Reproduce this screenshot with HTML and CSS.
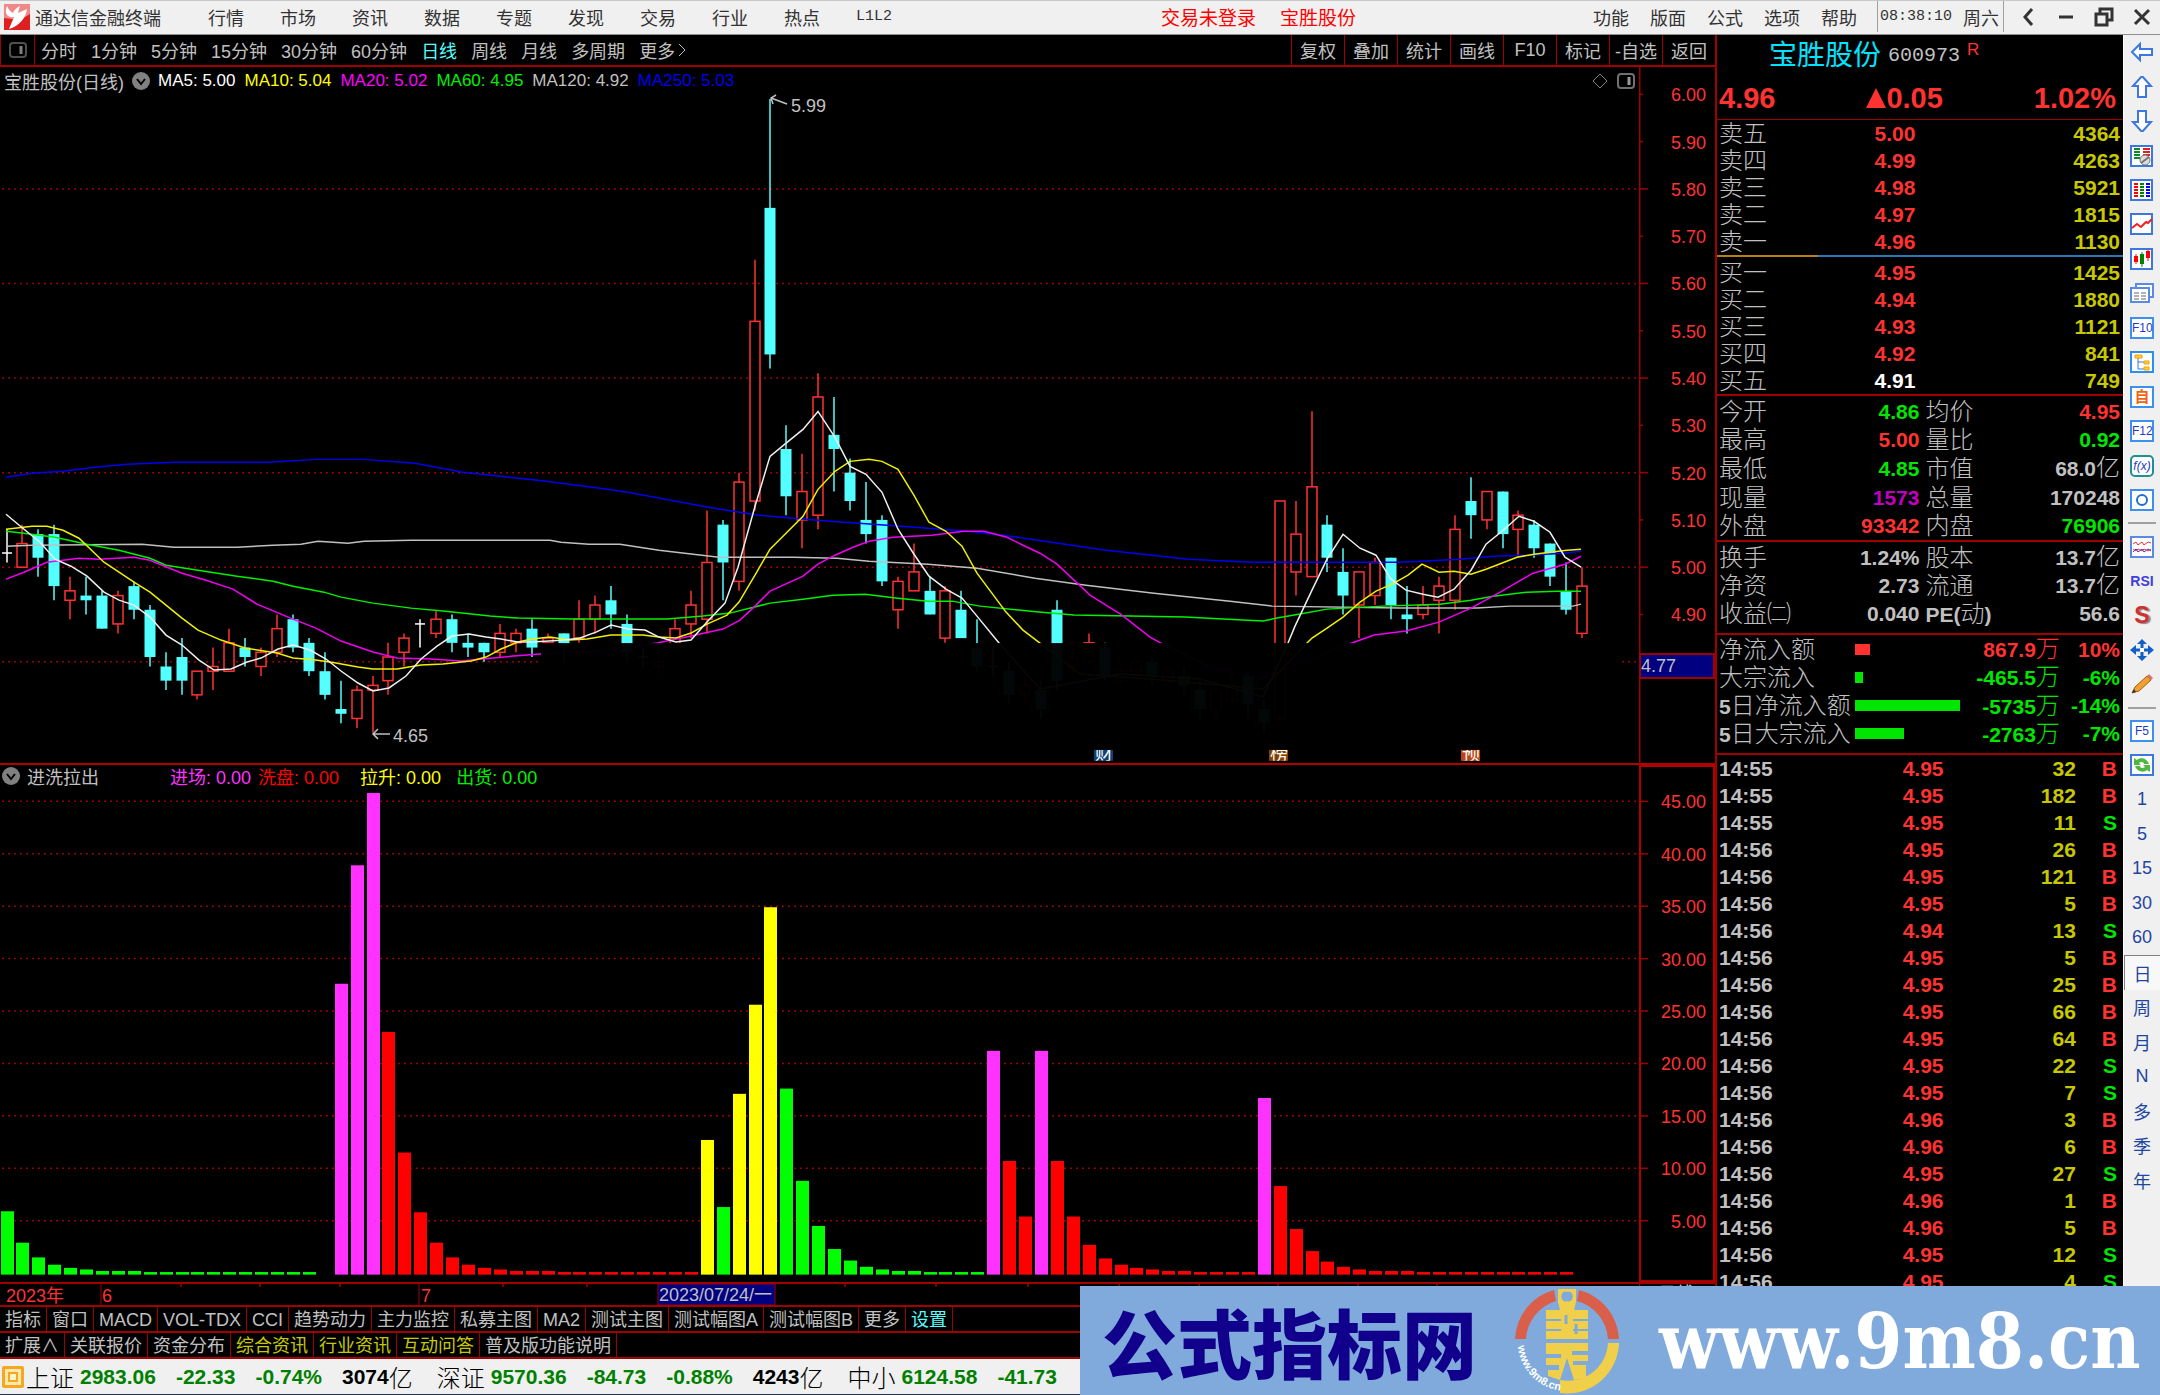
FILE: index.html
```html
<!DOCTYPE html>
<html lang="zh-CN">
<head>
    <meta charset="utf-8">
    <title>通达信金融终端</title>
    <link rel="stylesheet" href="styles.css">
</head>
<body>
<div class="app">

  <header class="topbar">
    <svg class="logo" viewBox="0 0 26 26" width="26" height="26">
      <rect width="26" height="26" fill="#e02020"/>
      <path d="M0 0H26V10L16 16L0 14Z" fill="#f08888"/>
      <path d="M3 2C0 9 3 14 10 13L5 25C15 22 22 14 23 5L14 9L16 2C12 4 10 6 9 9C7 8 5 6 3 2Z" fill="#fff"/>
    </svg>
    <span class="app-name">通达信金融终端</span>
    <nav class="menu">
      <a href="#">行情</a><a href="#">市场</a><a href="#">资讯</a><a href="#">数据</a><a href="#">专题</a><a href="#">发现</a><a href="#">交易</a><a href="#">行业</a><a href="#">热点</a><a href="#" class="mono">L1L2</a>
    </nav>
    <div class="login">
      <a href="#">交易未登录</a><a href="#">宝胜股份</a>
    </div>
    <nav class="menu menu-right">
      <a href="#">功能</a><a href="#">版面</a><a href="#">公式</a><a href="#">选项</a><a href="#">帮助</a>
    </nav>
    <div class="clock"><span class="mono">08:38:10</span><span>周六</span></div>
    <div class="win">
      <button aria-label="后退"><svg viewBox="0 0 20 20" width="20" height="20"><path d="M14 2L7 10L14 18" fill="none" stroke="#333" stroke-width="3"/></svg></button>
      <button aria-label="最小化"><svg viewBox="0 0 20 20" width="20" height="20"><path d="M3 10H17" stroke="#333" stroke-width="3"/></svg></button>
      <button aria-label="还原"><svg viewBox="0 0 20 20" width="20" height="20"><path d="M6 6V2H18V13H14M2 7H13V18H2Z" fill="none" stroke="#333" stroke-width="3"/></svg></button>
      <button aria-label="关闭"><svg viewBox="0 0 20 20" width="20" height="20"><path d="M3 3L17 17M17 3L3 17" stroke="#333" stroke-width="3"/></svg></button>
    </div>
  </header>

  <div class="body">
    <main class="left">
      <div class="toolbar">
        <button class="pane" aria-label="侧栏"><svg viewBox="0 0 18 18" width="18" height="18"><rect x="1" y="2" width="16" height="14" rx="3" fill="none" stroke="#505050" stroke-width="2"/><path d="M12 5V13" stroke="#808080" stroke-width="3"/></svg></button>
        <div class="periods">
          <a href="#">分时</a><a href="#">1分钟</a><a href="#">5分钟</a><a href="#">15分钟</a><a href="#">30分钟</a><a href="#">60分钟</a><a href="#" class="on">日线</a><a href="#">周线</a><a href="#">月线</a><a href="#">多周期</a><a href="#">更多<svg viewBox="0 0 14 16" width="14" height="16"><path d="M4 2L10 8L4 14" fill="none" stroke="#c0c0c0"/></svg></a>
        </div>
        <div class="tools">
          <button>复权</button><button>叠加</button><button>统计</button><button>画线</button><button>F10</button><button>标记</button><button>-自选</button><button>返回</button>
        </div>
      </div>

      <section class="chart chart-main">
        <div class="plot">
          <div class="legend">
            <span class="title">宝胜股份(日线)</span>
            <svg viewBox="0 0 18 18" width="18" height="18"><circle cx="9" cy="9" r="9" fill="#808080"/><path d="M5 7L9 12L13 7" fill="none" stroke="#000" stroke-width="2"/></svg>
            <span class="values">
              <span class="c-white">MA5: 5.00</span>
              <span class="c-yellow">MA10: 5.04</span>
              <span class="c-magenta">MA20: 5.02</span>
              <span class="c-green">MA60: 4.95</span>
              <span class="c-gray">MA120: 4.92</span>
              <span class="c-blue">MA250: 5.03</span>
            </span>
            <svg class="push" viewBox="0 0 18 18" width="18" height="18"><path d="M9 2L16 9L9 16L2 9Z" fill="none" stroke="#808080"/></svg>
            <svg viewBox="0 0 18 18" width="18" height="18"><rect x="1" y="2" width="16" height="14" rx="3" fill="none" stroke="#707070" stroke-width="2"/><path d="M12 5V13" stroke="#999" stroke-width="3"/></svg>
          </div>
          <svg id="kline" class="canvas" viewBox="0 91 1639 673" preserveAspectRatio="none"></svg>
        </div>
        <svg id="price-axis" class="axis" viewBox="1639 67 76 697" preserveAspectRatio="none"></svg>
      </section>

      <section class="chart chart-sub">
        <div class="plot">
          <div class="legend legend-sub">
            <svg viewBox="0 0 18 18" width="18" height="18"><circle cx="9" cy="9" r="9" fill="#808080"/><path d="M5 7L9 12L13 7" fill="none" stroke="#000" stroke-width="2"/></svg>
            <span class="title">进洗拉出</span>
            <span class="c-pink">进场: 0.00</span>
            <span class="c-red">洗盘: 0.00</span>
            <span class="c-yellow">拉升: 0.00</span>
            <span class="c-green">出货: 0.00</span>
          </div>
          <svg id="bars" class="canvas" viewBox="0 789 1639 493" preserveAspectRatio="none"></svg>
        </div>
        <svg id="bar-axis" class="axis" viewBox="1639 766 76 516" preserveAspectRatio="none"></svg>
      </section>

      <div class="dates">
        <svg id="dates" viewBox="0 1284 1639 21" preserveAspectRatio="none"></svg>
        <span>日线</span>
      </div>

      <nav class="tabs">
        <a href="#">指标</a><a href="#">窗口</a><a href="#">MACD</a><a href="#">VOL-TDX</a><a href="#">CCI</a><a href="#">趋势动力</a><a href="#">主力监控</a><a href="#">私募主图</a><a href="#">MA2</a><a href="#">测试主图</a><a href="#">测试幅图A</a><a href="#">测试幅图B</a><a href="#">更多</a><a href="#" class="on">设置</a>
      </nav>
      <nav class="tabs tabs-last">
        <a href="#">扩展∧</a><a href="#">关联报价</a><a href="#">资金分布</a><a href="#" class="gold">综合资讯</a><a href="#" class="gold">行业资讯</a><a href="#" class="gold">互动问答</a><a href="#">普及版功能说明</a>
      </nav>
    </main>

    <aside class="quote">
      <div class="stock"><b>宝胜股份</b><span>600973</span><sup>R</sup></div>
      <div class="last"><span>4.96</span><span class="chg"><svg viewBox="0 0 20 20" width="20" height="20"><path d="M10 0L20 20H0Z" fill="#ff3232"/></svg>0.05</span><span>1.02%</span></div>
      <table class="depth">
        <tr><th>卖五</th><td>5.00</td><td class="vol">4364</td></tr>
        <tr><th>卖四</th><td>4.99</td><td class="vol">4263</td></tr>
        <tr><th>卖三</th><td>4.98</td><td class="vol">5921</td></tr>
        <tr><th>卖二</th><td>4.97</td><td class="vol">1815</td></tr>
        <tr><th>卖一</th><td>4.96</td><td class="vol">1130</td></tr>
      </table>
      <div class="ratio"></div>
      <table class="depth bids">
        <tr><th>买一</th><td>4.95</td><td class="vol">1425</td></tr>
        <tr><th>买二</th><td>4.94</td><td class="vol">1880</td></tr>
        <tr><th>买三</th><td>4.93</td><td class="vol">1121</td></tr>
        <tr><th>买四</th><td>4.92</td><td class="vol">841</td></tr>
        <tr><th>买五</th><td class="w">4.91</td><td class="vol">749</td></tr>
      </table>
      <table class="stats">
        <tr><th>今开</th><td class="g">4.86</td><th>均价</th><td class="r">4.95</td></tr>
        <tr><th>最高</th><td class="r">5.00</td><th>量比</th><td class="g">0.92</td></tr>
        <tr><th>最低</th><td class="g">4.85</td><th>市值</th><td>68.0<i>亿</i></td></tr>
        <tr><th>现量</th><td class="m">1573</td><th>总量</th><td>170248</td></tr>
        <tr><th>外盘</th><td class="r">93342</td><th>内盘</th><td class="g">76906</td></tr>
      </table>
      <table class="stats stats-short">
        <tr><th>换手</th><td>1.24%</td><th>股本</th><td>13.7<i>亿</i></td></tr>
        <tr><th>净资</th><td>2.73</td><th>流通</th><td>13.7<i>亿</i></td></tr>
        <tr><th>收益㈡</th><td>0.040</td><th><b>PE(</b>动<b>)</b></th><td>56.6</td></tr>
      </table>
      <table class="flow">
        <tr class="r"><th>净流入额</th><td><div class="bar" style="width:14%"></div></td><td>867.9<i>万</i></td><td>10%</td></tr>
        <tr class="g"><th>大宗流入</th><td><div class="bar" style="width:7%"></div></td><td>-465.5<i>万</i></td><td>-6%</td></tr>
        <tr class="g"><th><b>5</b>日净流入额</th><td><div class="bar" style="width:100%"></div></td><td>-5735<i>万</i></td><td>-14%</td></tr>
        <tr class="g"><th><b>5</b>日大宗流入</th><td><div class="bar" style="width:47%"></div></td><td>-2763<i>万</i></td><td>-7%</td></tr>
      </table>
      <div class="ticks">
        <table id="ticks"></table>
      </div>
    </aside>

    <aside class="sidebar">
      <button aria-label="左"><svg viewBox="0 0 24 22"><path d="M2 11L10 3V8H22V14H10V19Z" fill="#fff" stroke="#3c78e0" stroke-width="2"/></svg></button>
      <button aria-label="上"><svg viewBox="0 0 24 22"><path d="M12 0L21 10H16V21H8V10H3Z" fill="#fff" stroke="#3c78e0" stroke-width="2"/></svg></button>
      <button aria-label="下"><svg viewBox="0 0 24 22"><path d="M12 22L21 12H16V1H8V12H3Z" fill="#fff" stroke="#3c78e0" stroke-width="2"/></svg></button>
      <button aria-label="报价"><svg viewBox="0 0 24 22"><rect x="1" y="1" width="21" height="20" fill="#fff" stroke="#3c78e0" stroke-width="2"/><path d="M4 4H10M4 7H10M4 10H10M4 13H10" stroke="#0a8a2a" stroke-width="2"/><path d="M13 4H20M13 7H20M13 10H20" stroke="#e02020" stroke-width="2"/><circle cx="15" cy="15" r="5" fill="#ddd" stroke="#777"/><path d="M11 18L19 12" stroke="#777" stroke-width="2"/></svg></button>
      <button aria-label="列表"><svg viewBox="0 0 24 22"><rect x="1" y="1" width="21" height="20" fill="#fff" stroke="#3c78e0" stroke-width="2"/><path d="M6 4V19" stroke="#f00" stroke-width="4" stroke-dasharray="2 1"/><path d="M12 4V19" stroke="#008000" stroke-width="4" stroke-dasharray="2 1"/><path d="M18 4V19" stroke="#00f" stroke-width="4" stroke-dasharray="2 1"/></svg></button>
      <button aria-label="分时图"><svg viewBox="0 0 24 22"><rect x="1" y="1" width="21" height="20" fill="#fff" stroke="#3c78e0" stroke-width="2"/><path d="M2 15L7 11L11 14L16 9L18 10L22 6" fill="none" stroke="#f02020" stroke-width="2"/></svg></button>
      <button aria-label="K线图"><svg viewBox="0 0 24 22"><rect x="1" y="1" width="21" height="20" fill="#fff" stroke="#3c78e0" stroke-width="2"/><path d="M6 6V16M18 2V13" stroke="#f00" stroke-width="1"/><path d="M12 4V19" stroke="#008000"/><path d="M6 8V14M18 3V10" stroke="#f00" stroke-width="4"/><path d="M12 6V16" stroke="#008000" stroke-width="4"/></svg></button>
      <button aria-label="窗口"><svg viewBox="0 0 24 22"><path d="M6 6V2H23V15H19" fill="#fff" stroke="#5a8ae6" stroke-width="2"/><rect x="1" y="6" width="18" height="14" fill="#fff" stroke="#5a8ae6" stroke-width="2"/><path d="M4 11H9M11 11H16M4 14H9M11 14H16M4 17H9M11 17H16" stroke="#666"/></svg></button>
      <button><span class="key">F10</span></button>
      <button aria-label="树形"><svg viewBox="0 0 24 22"><rect x="1" y="1" width="22" height="20" fill="#fff" stroke="#2a90f0" stroke-width="2"/><path d="M8 7V18H14M8 11H14" fill="none" stroke="#3c78e0"/><path d="M5 4H12V7H5ZM14 10H19V13H14ZM14 16H19V19H14Z" fill="#ffd040" stroke="#f0a000"/></svg></button>
      <button><span class="key key-self">自</span></button>
      <button><span class="key">F12</span></button>
      <button><span class="key key-fx">f(x)</span></button>
      <button aria-label="刷新"><svg viewBox="0 0 24 22"><rect x="1" y="1" width="22" height="20" fill="#fff" stroke="#3c90f0" stroke-width="2"/><circle cx="12" cy="11" r="5" fill="none" stroke="#2070d0" stroke-width="2"/></svg></button>
      <hr>
      <button aria-label="指标"><svg viewBox="0 0 24 22"><rect x="1" y="1" width="22" height="20" fill="#fff" stroke="#5a8ae6" stroke-width="2"/><path d="M3 8L6 6L8 9L12 6L14 9L18 6L21 7" fill="none" stroke="#f03030" stroke-width="1"/><path d="M3 16L6 13L8 16L12 13L14 16L18 13L21 15" fill="none" stroke="#3030e0" stroke-width="1"/><path d="M3 13L6 15L8 13L12 15L14 13L18 15L21 13" fill="none" stroke="#f03030" stroke-width="1"/></svg></button>
      <button class="rsi">RSI</button>
      <button class="dollar">S</button>
      <button aria-label="移动"><svg viewBox="0 0 24 22"><path d="M12 0L17 5H7ZM12 22L17 17H7ZM0 11L6 6V16ZM24 11L18 6V16Z" fill="#1060c8"/><path d="M12 4V18M5 11H19" stroke="#1060c8" stroke-width="3"/><rect x="10" y="9" width="4" height="4" fill="#fff"/></svg></button>
      <button aria-label="画笔"><svg viewBox="0 0 24 22"><path d="M2 20L5 14L17 3L21 7L9 18Z" fill="#f0a030" stroke="#a05a10"/><path d="M17 3L19 1L23 5L21 7Z" fill="#e07070"/><path d="M2 20L4 16L6 19Z" fill="#333"/></svg></button>
      <hr>
      <button><span class="key">F5</span></button>
      <button aria-label="循环"><svg viewBox="0 0 24 22"><rect x="1" y="1" width="22" height="20" fill="#fff" stroke="#3c78e0" stroke-width="2"/><path d="M19 10C17 4 10 3 7 6L4 4V11H11L9 9C11 7 14 8 14 10ZM5 12C7 18 14 19 17 16L20 18V11H13L15 13C13 15 10 14 10 12Z" fill="#50b840"/></svg></button>
      <button>1</button>
      <button>5</button>
      <button>15</button>
      <button>30</button>
      <button>60</button>
      <button class="pressed">日</button>
      <button>周</button>
      <button>月</button>
      <button>N</button>
      <button>多</button>
      <button>季</button>
      <button>年</button>
    </aside>
  </div>

  <footer class="status">
    <svg viewBox="0 0 22 22" width="22" height="22"><rect width="22" height="22" rx="2" fill="#f5a623"/><rect x="3" y="3" width="16" height="16" fill="#ffe9a8"/><rect x="6" y="6" width="10" height="10" fill="#f5a623"/><rect x="8" y="8" width="6" height="6" fill="#fff3c8"/></svg>
    <div class="index"><i>上证</i><b>2983.06</b></div><b>-22.33</b><b>-0.74%</b><span class="amount">3074<i>亿</i></span>
    <div class="index"><i>深证</i><b>9570.36</b></div><b>-84.73</b><b>-0.88%</b><span class="amount">4243<i>亿</i></span>
    <div class="index"><i>中小</i><b>6124.58</b></div><b>-41.73</b>
  </footer>

  <div class="banner">
    <strong>公式指标网</strong>
    <svg viewBox="0 0 106 106" width="106" height="106">
      <path d="M39 2A53 53 0 0 0 0 51H11A42 42 0 0 1 41 13Z" fill="#d95f4a"/>
      <path d="M64 2A53 53 0 0 1 104 51H93A42 42 0 0 0 62 13Z" fill="#d95f4a"/>
      <path d="M104 55A52 52 0 0 1 45 105V92A40 40 0 0 0 93 55Z" fill="#f0d04a"/>
      <path fill-rule="evenodd" d="M43 1H61V14L59 22H73V51H31V22H45L43 14ZM52 4A4 5 0 1 0 52 13A4 5 0 1 0 52 4Z" fill="#f0d04a"/>
      <path d="M31 32H46M58 32H73M31 42H46M58 42H73" stroke="#80aadb" stroke-width="2"/>
      <path d="M51 27V36M61 36V46" stroke="#80aadb" stroke-width="3"/>
      <path d="M31 55H73V63H57V67H73V73H58V77H71V90L59 92L52 70L45 92L33 88V82H44V77H31V70H46V66H31Z" fill="#f0d04a"/>
      <path id="arc" d="M3 58A49 49 0 0 0 42 102" fill="none"/>
      <text fill="#fff" class="arc-text"><textPath href="#arc">www.9m8.cn</textPath></text>
    </svg>
    <span>www.9m8.cn</span>
  </div>
</div>
<script src="chart.js"></script>
</body>
</html>
```

FILE: styles.css
```css
* {
    box-sizing: border-box;
}

body {
    margin: 0;
    background: #000;
    color: #c0c0c0;
    font-family: "Liberation Sans", "Noto Sans CJK SC", sans-serif;
    font-size: 18px;
}

a {
    color: inherit;
    text-decoration: none;
}

button {
    background: none;
    border: 0;
    padding: 0;
    color: inherit;
    font: inherit;
}

i {
    font-style: normal;
    font-weight: 300;
}

.mono {
    font-family: "Liberation Mono", monospace;
    font-size: 15px;
}

.app {
    position: relative;
    display: flex;
    flex-direction: column;
    height: 100vh;
    overflow: hidden;
}

/* top bar */
.topbar {
    display: flex;
    align-items: center;
    height: 35px;
    flex: none;
    padding: 0 0 2px 4px;
    background: #f0f0f0;
    border-top: 1px solid #c8c8c8;
    border-bottom: 1px solid #909090;
    color: #333;
}

.app-name {
    margin: 0 47px 0 5px;
}

.menu {
    display: flex;
    align-items: center;
    gap: 36px;
}

.menu-right {
    gap: 21px;
    padding-right: 20px;
}

.login {
    display: flex;
    gap: 24px;
    margin: 0 auto;
    padding-left: 32px;
    color: #f00;
    font-size: 19px;
}

.clock {
    display: flex;
    align-items: center;
    gap: 11px;
    height: 100%;
    padding: 0 4px 0 2px;
    border-left: 1px solid #a0a0a0;
    border-right: 1px solid #a0a0a0;
}

.win {
    display: flex;
    gap: 18px;
    padding: 0 8px 0 14px;
}

.win svg {
    display: block;
}

/* layout */
.body {
    display: grid;
    grid-template-columns: 1fr 408px 37px;
    flex: 1;
    min-height: 0;
}

.left {
    display: flex;
    flex-direction: column;
    min-width: 0;
    min-height: 0;
}

.toolbar {
    display: flex;
    height: 32px;
    flex: none;
    border-bottom: 2px solid #a00000;
}

.pane {
    width: 35px;
    border-left: 1px solid #a00000;
    border-right: 1px solid #a00000;
}

.pane svg {
    display: block;
    margin: 0 auto;
}

.periods {
    display: flex;
    align-items: center;
    gap: 14px;
    padding-left: 6px;
}

.periods a {
    display: flex;
    align-items: center;
}

.on {
    color: #54ffff;
}

.tools {
    display: flex;
    margin-left: auto;
}

.tools button {
    width: 53px;
    border-left: 1px solid #a00000;
}

.chart {
    display: grid;
    grid-template-columns: 1fr 76px;
    min-height: 0;
}

.chart-main {
    flex: 697 1 0;
}

.chart-sub {
    flex: 518 1 0;
    border-top: 2px solid #b00000;
}

.plot {
    display: flex;
    flex-direction: column;
    min-height: 0;
    min-width: 0;
}

.legend {
    display: flex;
    align-items: center;
    gap: 8px;
    height: 24px;
    flex: none;
    padding: 4px 4px 0;
}

.values {
    display: flex;
    gap: 9px;
    font-size: 17px;
}

.legend-sub {
    height: 23px;
    padding: 0 2px;
    gap: 7px;
}

.legend-sub .title {
    margin-right: 64px;
}

.legend-sub .c-yellow {
    margin: 0 8px 0 14px;
}

.push {
    margin-left: auto;
}

.c-white { color: #fff; }
.c-yellow { color: #ff0; }
.c-magenta { color: #f0f; }
.c-pink { color: #ff32ff; }
.c-green { color: #00f000; }
.c-gray { color: #c0c0c0; }
.c-blue { color: #0000f0; }
.c-red { color: #f00; }

.canvas {
    display: block;
    width: 100%;
    flex: 1;
    min-height: 0;
}

.axis {
    display: block;
    width: 100%;
    height: 100%;
    min-height: 0;
}

.dates {
    display: grid;
    grid-template-columns: 1fr 76px;
    height: 23px;
    flex: none;
    border-top: 2px solid #a00000;
    overflow: hidden;
}

.dates svg {
    width: 100%;
    height: 21px;
}

.dates span {
    padding-left: 18px;
    line-height: 21px;
    border-left: 1px solid #a00000;
}

.tabs {
    display: flex;
    height: 26px;
    flex: none;
    border-top: 2px solid #a00000;
    line-height: 26px;
}

.tabs a {
    height: 24px;
    padding: 0 5px;
    border-right: 1px solid #a00000;
}

.tabs-last {
    height: 28px;
    border-bottom: 2px solid #a00000;
}

.gold {
    color: #c8c800;
}

svg text {
    font-family: "Liberation Sans", "Noto Sans CJK SC", sans-serif;
    font-size: 18px;
}

/* quote panel */
.quote {
    display: flex;
    flex-direction: column;
    min-height: 0;
    border-left: 2px solid #a00000;
    overflow: hidden;
}

.stock {
    display: flex;
    align-items: center;
    height: 42px;
    flex: none;
    padding-left: 52px;
    line-height: 42px;
}

.stock b {
    color: #00e4ff;
    font-size: 28px;
    font-weight: 400;
}

.stock span {
    margin-left: 7px;
    font-family: "Liberation Mono", monospace;
    font-size: 20px;
    line-height: 48px;
}

.stock sup {
    margin-left: 7px;
    color: #ff3232;
    font-size: 17px;
    line-height: 30px;
    align-self: flex-start;
}

.last {
    display: flex;
    justify-content: space-between;
    height: 43px;
    flex: none;
    padding: 0 7px 0 2px;
    border-bottom: 1px solid #a00000;
    color: #ff3232;
    font-size: 29px;
    font-weight: bold;
    line-height: 43px;
}

.quote table {
    flex: none;
    width: 100%;
    padding: 0 3px 0 2px;
    border-spacing: 0;
    table-layout: fixed;
    font-size: 21px;
    font-weight: bold;
    text-align: right;
}

.quote th,
.quote td {
    height: 27px;
    padding: 0;
    line-height: 27px;
    white-space: nowrap;
}

.quote th {
    font-size: 24px;
    font-weight: 300;
    text-align: left;
}

.quote th b {
    font-size: 21px;
    font-weight: bold;
}

.quote td i {
    font-size: 24px;
}

.depth th {
    width: 24%;
}

.depth td {
    color: #ff3232;
    width: 25%;
}

.depth .vol,
.vol {
    color: #c8c800;
    width: auto;
}

.depth .w {
    color: #fff;
}

.ratio {
    height: 2px;
    flex: none;
    background: linear-gradient(to right, #b48214 25%, #2878b4 25%);
}

.quote .bids {
    padding-top: 2px;
    height: 138px;
    border-bottom: 2px solid #a00000;
}

.quote .stats {
    height: 146px;
    padding-top: 1px;
    border-bottom: 2px solid #a00000;
}

.quote .stats-short {
    height: 93px;
    padding-bottom: 5px;
}

.stats th {
    width: 24%;
}

.stats td + th {
    padding-left: 6px;
}

.quote .flow {
    height: 120px;
    padding-bottom: 5px;
    border-bottom: 2px solid #a00000;
}

.stats td {
    width: 25%;
}

.flow th {
    width: 34%;
    color: #c0c0c0;
}

.flow td:nth-child(2) {
    width: 26%;
}

.flow td:nth-child(4) {
    width: 15%;
}

.bar {
    height: 11px;
    background: currentColor;
}

.r { color: #ff3232; }
.g { color: #00e600; }
.m { color: #c000c0; }

.ticks {
    flex: 1;
    min-height: 0;
    overflow: hidden;
}

.ticks td:nth-child(1) {
    width: 25%;
    text-align: left;
}

.ticks td:nth-child(2) {
    width: 31%;
}

.ticks td:nth-child(3) {
    width: 33%;
}

.ticks td:nth-child(4) {
    padding-right: 3px;
}

/* right icon bar */
.sidebar {
    display: flex;
    flex-direction: column;
    padding-bottom: 162px;
    background: #f0f0f0;
    border-left: 1px solid #fff;
    color: #1e46a0;
    font-size: 18px;
}

.sidebar button {
    flex: 1 1 0;
    min-height: 0;
    display: flex;
    align-items: center;
    justify-content: center;
}

.sidebar svg {
    width: 24px;
    height: 22px;
}

.sidebar hr {
    width: 28px;
    height: 2px;
    margin: 5px auto;
    border: 0;
    background: #a0a0a0;
}

.key {
    width: 24px;
    height: 22px;
    border: 2px solid #3c90f0;
    background: #fff;
    color: #1e3cc8;
    font-size: 12px;
    line-height: 18px;
    text-align: center;
}

.key-self {
    color: #f06414;
    font-size: 15px;
    font-weight: bold;
}

.key-fx {
    border-color: #209090;
    border-radius: 5px;
    font-style: italic;
}

.sidebar .rsi {
    color: #4040d8;
    font-size: 14px;
    font-weight: bold;
}

.sidebar .dollar {
    color: #d03030;
    font-size: 23px;
    font-weight: bold;
    text-shadow: 2px 1px 1px #888;
}

.sidebar .pressed {
    background: #f8f8f8;
    border-top: 1px solid #808080;
    border-left: 1px solid #808080;
}

/* status bar */
.status {
    display: flex;
    align-items: center;
    gap: 20px;
    height: 36px;
    flex: none;
    padding-left: 2px;
    background: #f0f0f0;
    border-bottom: 1px solid #203050;
    color: #000;
    font-size: 21px;
}

.status > svg {
    margin-right: -18px;
}

.status i {
    font-size: 24px;
}

.status b {
    color: #008000;
}

.index,
.amount {
    display: flex;
    align-items: center;
}

.index {
    gap: 6px;
}

.amount {
    margin-right: 4px;
    font-weight: bold;
}

/* site banner over the bottom right corner */
.banner {
    position: absolute;
    right: 0;
    bottom: 0;
    display: flex;
    align-items: center;
    width: 50%;
    height: 109px;
    padding-left: 22px;
    background: #80aadb;
    color: #fff;
    white-space: nowrap;
}

.banner strong {
    color: #10008c;
    font-family: "Noto Sans CJK SC", sans-serif;
    font-size: 75px;
    font-weight: 900;
    line-height: 109px;
}

.banner svg {
    margin: 0 38px;
    flex: none;
}

.banner span {
    font-family: "DejaVu Serif Condensed", "DejaVu Serif", serif;
    font-size: 77px;
    font-weight: bold;
}

.banner .arc-text {
    font-size: 11px;
    font-weight: bold;
}
```

FILE: chart.js
```js
// bars sit 15.915 apart, first one at 6.5
function barX(i) { return 6.5 + i * 15.915; }
function priceY(p) { return 568 - (p - 5) * 473.6; }
function valueY(v) { return 1273 - v * 10.46; }

function line(x1, y1, x2, y2, color, extra) {
    return '<line x1="' + x1 + '" y1="' + y1 + '" x2="' + x2 + '" y2="' + y2 + '" stroke="' + color + '" ' + (extra || '') + '/>';
}
function rect(x, y, w, h, fill, extra) {
    return '<rect x="' + x + '" y="' + y + '" width="' + w + '" height="' + h + '" fill="' + fill + '" ' + (extra || '') + '/>';
}
function text(x, y, s, color, extra) {
    return '<text x="' + x + '" y="' + y + '" fill="' + color + '" ' + (extra || '') + '>' + s + '</text>';
}

// [open, close, high, low]
var candles = [
    [5.03,5.03,5.08,5.01],[5.00,5.05,5.09,5.00],[5.07,5.02,5.08,4.98],[5.07,4.96,5.09,4.93],[4.93,4.95,4.98,4.89],
    [4.94,4.93,4.98,4.90],[4.94,4.87,4.95,4.87],[4.88,4.94,4.95,4.86],[4.96,4.91,4.97,4.89],[4.91,4.81,4.92,4.79],
    [4.79,4.76,4.82,4.74],[4.81,4.76,4.85,4.73],[4.73,4.78,4.78,4.72],[4.78,4.79,4.83,4.74],[4.78,4.84,4.87,4.78],
    [4.83,4.81,4.85,4.79],[4.79,4.82,4.83,4.77],[4.82,4.87,4.90,4.81],[4.89,4.83,4.90,4.82],[4.84,4.78,4.85,4.77],
    [4.78,4.73,4.82,4.72],[4.70,4.69,4.76,4.67],[4.68,4.74,4.75,4.66],[4.74,4.75,4.77,4.65],[4.76,4.81,4.84,4.73],
    [4.82,4.85,4.86,4.79],[4.88,4.88,4.89,4.83],[4.86,4.89,4.91,4.85],[4.89,4.84,4.90,4.82],[4.84,4.83,4.86,4.81],
    [4.84,4.82,4.84,4.80],[4.82,4.86,4.88,4.81],[4.84,4.86,4.87,4.82],[4.87,4.83,4.89,4.81],[4.84,4.85,4.86,4.84],
    [4.86,4.83,4.86,4.80],[4.85,4.89,4.93,4.84],[4.89,4.92,4.94,4.86],[4.93,4.90,4.96,4.87],[4.88,4.82,4.90,4.80],
    [4.81,4.81,4.83,4.79],[4.79,4.80,4.84,4.77],[4.83,4.87,4.89,4.82],[4.88,4.92,4.95,4.85],[4.89,5.01,5.12,4.86],
    [5.09,5.01,5.10,4.93],[4.97,5.18,5.20,4.95],[5.14,5.52,5.65,5.12],[5.76,5.45,5.99,5.42],[5.25,5.15,5.30,5.11],
    [5.10,5.16,5.24,5.04],[5.11,5.36,5.41,5.08],[5.28,5.25,5.36,5.16],[5.20,5.14,5.23,5.12],[5.10,5.07,5.18,5.05],
    [5.10,4.97,5.11,4.96],[4.91,4.97,4.98,4.87],[4.95,4.99,5.05,4.95],[4.95,4.90,4.98,4.90],[4.85,4.95,4.96,4.84],
    [4.91,4.85,4.95,4.85],[4.83,4.79,4.89,4.78],[4.79,4.79,4.83,4.77],[4.78,4.73,4.80,4.71],[4.73,4.75,4.78,4.71],
    [4.74,4.70,4.76,4.68],[4.91,4.76,4.93,4.74],[4.79,4.81,4.83,4.77],[4.80,4.84,4.86,4.79],[4.83,4.77,4.84,4.76],
    [4.76,4.78,4.80,4.74],[4.78,4.80,4.82,4.75],[4.80,4.77,4.81,4.75],[4.76,4.78,4.79,4.74],[4.77,4.75,4.79,4.73],
    [4.74,4.70,4.76,4.68],[4.70,4.74,4.76,4.68],[4.72,4.75,4.78,4.71],[4.77,4.71,4.78,4.68],[4.70,4.67,4.72,4.65],
    [4.68,5.14,5.14,4.67],[4.99,5.07,5.14,4.94],[4.98,5.17,5.33,4.98],[5.09,5.02,5.11,4.99],[4.99,4.94,5.04,4.90],
    [4.92,4.99,4.99,4.85],[4.94,5.01,5.02,4.92],[5.02,4.92,5.02,4.89],[4.90,4.89,4.96,4.86],[4.90,4.92,4.96,4.89],
    [4.93,4.96,4.98,4.86],[4.93,5.08,5.11,4.91],[5.14,5.11,5.19,5.06],[5.10,5.16,5.16,5.08],[5.16,5.07,5.16,5.04],
    [5.08,5.11,5.12,5.02],[5.09,5.04,5.10,5.02],[5.05,4.98,5.05,4.96],[4.95,4.91,5.01,4.90],[4.86,4.96,5.00,4.85]
];

var averages = [
    // MA250
    ['#0000f0', '6,478 32,474 63,472 95,468 127,465 174,463 269,463 316,460 364,460 415,464 463,473 538,481 600,489 628,493 703,507 758,516 817,521 901,527 968,532 1011,537 1106,551 1189,560 1230,562 1255,563 1400,563 1460,560 1493,557 1527,556 1563,554 1581,552'],
    // MA120
    ['#c0c0c0', '6,547 32,546 142,545 174,548 237,548 273,546 301,545 318,542 348,544 364,542 411,541 550,541 561,543 589,545 620,545 659,551 719,558 794,558 837,559 869,562 928,565 977,569 1035,579 1086,586 1154,594 1230,602 1272,607 1400,609 1477,609 1510,607 1573,607 1581,605'],
    // MA60
    ['#00f000', '6,532 24,534 55,538 87,545 119,551 150,559 166,566 198,571 237,577 273,582 293,587 324,593 341,598 373,604 411,609 443,612 490,617 518,619 573,620 667,620 703,617 730,614 770,604 803,600 833,596 865,595 898,599 928,602 952,602 980,607 1039,613 1074,616 1185,618 1223,620 1263,622 1277,619 1300,615 1327,610 1383,607 1440,605 1471,601 1493,597 1527,593 1557,592 1581,592'],
    // MA20
    ['#f000f0', '6,580 24,573 47,563 79,559 99,560 134,558 150,561 182,574 206,581 233,590 257,605 293,620 316,629 341,642 373,653 397,659 431,660 461,662 482,660 514,657 540,655 600,652 657,644 691,637 723,630 740,621 755,607 770,592 803,577 818,565 835,556 853,548 869,542 893,538 932,536 964,532 984,532 1007,538 1023,546 1040,554 1057,565 1090,596 1122,616 1150,638 1161,644 1210,668 1260,680 1300,664 1352,644 1374,636 1406,632 1439,623 1471,609 1502,592 1533,574 1565,565 1581,557'],
    // MA10
    ['#f0f000', '6,530 32,527 47,527 63,531 79,539 104,563 134,583 150,593 182,619 198,631 221,641 245,649 277,654 293,659 316,661 336,664 358,668 373,670 397,670 421,666 443,665 471,662 486,658 501,650 518,643 532,640 550,638 569,641 587,640 611,636 643,636 659,638 676,639 691,634 707,625 727,616 739,603 755,576 770,550 787,533 803,517 818,490 835,472 850,462 869,460 882,462 898,470 914,496 929,523 946,532 962,547 977,574 1006,613 1023,631 1040,644 1080,675 1150,680 1263,690 1307,644 1312,639 1327,629 1343,618 1360,603 1376,592 1394,584 1408,576 1422,565 1439,573 1454,572 1471,575 1486,570 1517,558 1534,555 1550,553 1567,551 1581,550'],
    // MA5
    ['#f0f0f0', '6,515 24,530 40,543 55,560 71,567 87,577 104,593 119,601 134,606 150,618 166,636 182,646 199,661 214,671 231,670 247,663 261,659 278,650 293,646 310,651 326,660 341,672 358,684 373,692 389,689 406,677 421,660 437,647 452,637 469,635 486,638 501,640 518,643 532,643 565,641 580,639 596,633 611,626 628,630 645,631 659,638 676,643 691,641 707,623 725,604 738,568 755,507 770,457 787,443 803,430 818,412 835,438 850,467 866,475 882,493 898,530 914,555 929,577 946,590 962,599 977,617 999,644 1040,690 1120,675 1200,680 1263,698 1288,644 1295,627 1312,591 1327,560 1343,535 1360,549 1376,556 1391,580 1406,591 1423,595 1438,598 1454,590 1471,571 1486,545 1502,532 1519,517 1534,522 1550,533 1565,558 1581,568']
];

function drawKline() {
    var s = '', i;
    [5.8, 5.6, 5.4, 5.2, 5.0, 4.8].forEach(function (p) {
        s += line(2, priceY(p), 1639, priceY(p), '#a00000', 'stroke-width="1.5" stroke-dasharray="2 4"');
    });
    for (i = 0; i < candles.length; i++) {
        var c = candles[i], x = Math.round(barX(i));
        var top = priceY(Math.max(c[0], c[1])), bottom = priceY(Math.min(c[0], c[1]));
        if (c[0] == c[1]) {
            s += line(x, priceY(c[2]), x, priceY(c[3]), '#fff', 'stroke-width="1.5"');
            s += line(x - 5, top, x + 5, top, '#fff', 'stroke-width="1.5"');
        } else if (c[1] > c[0]) {
            s += line(x, priceY(c[2]), x, top, '#ff3232', 'stroke-width="1.5"');
            s += line(x, bottom, x, priceY(c[3]), '#ff3232', 'stroke-width="1.5"');
            s += rect(x - 5, top, 10, bottom - top, '#000', 'stroke="#ff3232" stroke-width="1.5"');
        } else {
            s += line(x, priceY(c[2]), x, priceY(c[3]), '#54ffff', 'stroke-width="1.5"');
            s += rect(x - 5.5, top, 11, bottom - top, '#54ffff');
        }
    }
    averages.forEach(function (m) {
        s += '<polyline points="' + m[1] + '" fill="none" stroke="' + m[0] + '" stroke-width="1.5"/>';
    });
    // dimmed strip under 4.84
    s += rect(541, 644, 1080, 104, '#000', 'opacity="0.97"');

    s += '<path d="M390 735H373M378 730L373 735L378 740M787 104L771 98M776 95L771 98L773 104" fill="none" stroke="#c0c0c0" stroke-width="1.5"/>';
    s += text(393, 743, '4.65', '#c0c0c0') + text(791, 112, '5.99', '#c0c0c0');

    [[1094, '财', '#0f4078'], [1269, '榜', '#824100'], [1461, '预', '#b84614']].forEach(function (e) {
        s += rect(e[0], 751, 19, 11, e[2]);
        s += '<svg x="' + e[0] + '" y="751" width="19" height="11">' + text(1, 10, e[1], '#fff') + '</svg>';
    });
    document.getElementById('kline').innerHTML = s;
}

function drawPriceAxis() {
    var s = line(1639.5, 67, 1639.5, 764, '#a00000', 'stroke-width="2"');
    for (var n = 60; n >= 49; n--) {
        var y = priceY(n / 10);
        s += line(1640, y, n % 2 ? 1643 : (n == 60 ? 1643 : 1648), y, '#a00000', 'stroke-width="1.5"');
        s += text(1706, y + 7, (n / 10).toFixed(2), '#ff3232', 'text-anchor="end"');
    }
    s += rect(1640, 655, 74, 24, '#000080', 'stroke="#a00000" stroke-width="2"');
    s += text(1641, 673, '4.77', '#c0c0c0');
    document.getElementById('price-axis').innerHTML = s;
}

var green = '#00ff00', pink = '#ff32ff', red = '#ff0000', yellow = '#ffff00';
// [first bar, colour, values]
var runs = [
    [0, green, [5.9, 2.9, 1.5, .8, .5, .35, .2, .2, .2, .1, .1, .1, .1, .1, .1, .1, .1, .1, .1, .1]],
    [21, pink, [27.6, 38.9, 45.8]],
    [24, red, [23, 11.5, 5.8, 2.9, 1.5, .8, .5, .35, .2, .2, .2, .1, .1, .1, .1, .1, .1, .1, .1, .1]],
    [44, yellow, [12.7]],
    [45, green, [6.3]],
    [46, yellow, [17.1, 25.6, 34.9]],
    [49, green, [17.6, 8.8, 4.5, 2.3, 1.2, .6, .35, .2, .2, .1, .1, .1, .1]],
    [62, pink, [21.2]],
    [63, red, [10.7, 5.4]],
    [65, pink, [21.2]],
    [66, red, [10.7, 5.4, 2.7, 1.4, .8, .5, .35, .2, .2, .1, .1, .1, .1]],
    [79, pink, [16.7]],
    [80, red, [8.3, 4.2, 2.1, 1.1, .6, .35, .2, .2, .2, .1, .1, .1, .1, .1, .1, .1, .1, .1, .1]]
];

function drawBars() {
    var s = '', v;
    for (v = 5; v <= 45; v += 5) {
        s += line(2, valueY(v), 1639, valueY(v), '#a00000', 'stroke-width="1.5" stroke-dasharray="2 4"');
    }
    runs.forEach(function (r) {
        r[2].forEach(function (val, k) {
            var x = Math.round(barX(r[0] + k)) - 6;
            s += rect(x, valueY(val), 13, 1274.5 - valueY(val), r[1]);
        });
    });
    document.getElementById('bars').innerHTML = s;

    s = rect(1640, 767, 74, 514, 'none', 'stroke="#b00000" stroke-width="2"');
    for (v = 5; v <= 45; v += 5) {
        s += line(1640, valueY(v), 1648, valueY(v), '#a00000', 'stroke-width="1.5"');
        s += text(1706, valueY(v) + 7, v.toFixed(2), '#ff3232', 'text-anchor="end"');
    }
    document.getElementById('bar-axis').innerHTML = s;
}

function drawDates() {
    var s = '';
    [181, 260, 340, 503, 587, 845, 936, 1028, 1119, 1199, 1278, 1358, 1437].forEach(function (x) {
        s += line(x, 1284, x, 1287, '#a00000', 'stroke-width="1.5"');
    });
    s += line(101, 1284, 101, 1305, '#a00000') + line(419, 1284, 419, 1305, '#a00000');
    s += text(6, 1302, '2023年', '#ff3232') + text(102, 1302, '6', '#ff3232') + text(421, 1302, '7', '#ff3232');
    s += rect(658, 1284, 117, 21, '#000080', 'stroke="#a00000"');
    s += text(659, 1301, '2023/07/24/一', '#c0c0c0');
    document.getElementById('dates').innerHTML = s;
}

var ticks = [
    ['14:55', 4.95, 32, 'B'], ['14:55', 4.95, 182, 'B'], ['14:55', 4.95, 11, 'S'], ['14:56', 4.95, 26, 'B'],
    ['14:56', 4.95, 121, 'B'], ['14:56', 4.95, 5, 'B'], ['14:56', 4.94, 13, 'S'], ['14:56', 4.95, 5, 'B'],
    ['14:56', 4.95, 25, 'B'], ['14:56', 4.95, 66, 'B'], ['14:56', 4.95, 64, 'B'], ['14:56', 4.95, 22, 'S'],
    ['14:56', 4.95, 7, 'S'], ['14:56', 4.96, 3, 'B'], ['14:56', 4.96, 6, 'B'], ['14:56', 4.95, 27, 'S'],
    ['14:56', 4.96, 1, 'B'], ['14:56', 4.96, 5, 'B'], ['14:56', 4.95, 12, 'S'], ['14:56', 4.95, 4, 'S']
];

function drawTicks() {
    document.getElementById('ticks').innerHTML = ticks.map(function (t) {
        return '<tr><td>' + t[0] + '</td><td class="r">' + t[1] + '</td><td class="vol">' + t[2] +
            '</td><td class="' + (t[3] == 'B' ? 'r' : 'g') + '">' + t[3] + '</td></tr>';
    }).join('');
}

drawKline();
drawPriceAxis();
drawBars();
drawDates();
drawTicks();
```
